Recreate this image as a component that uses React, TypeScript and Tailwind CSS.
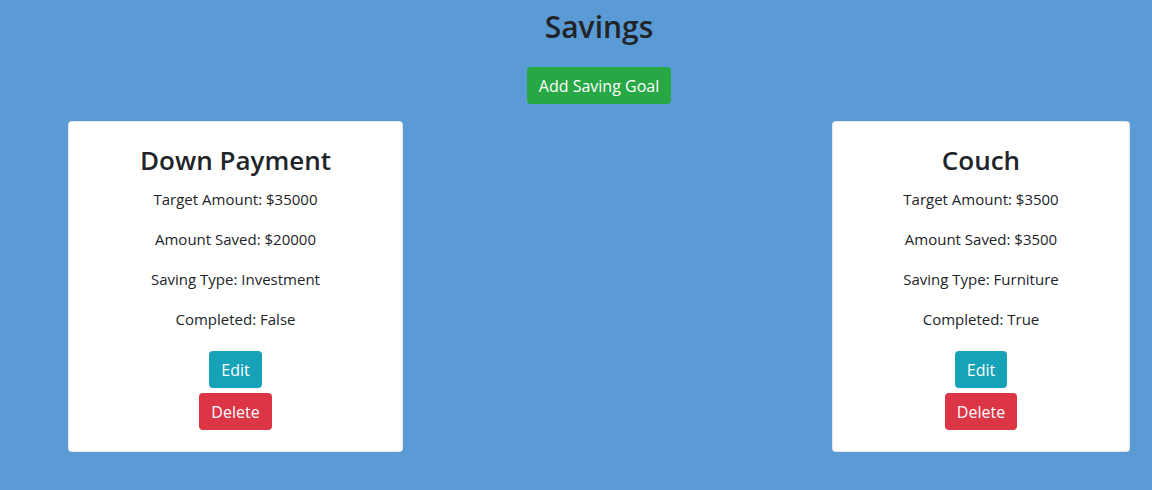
import React from 'react';

type Goal = {
  name: string;
  target: number;
  saved: number;
  type: string;
  completed: boolean;
  width: string;
};

const goals: Goal[] = [
  { name: 'Down Payment', target: 35000, saved: 20000, type: 'Investment', completed: false, width: 'w-[335px]' },
  { name: 'Couch', target: 3500, saved: 3500, type: 'Furniture', completed: true, width: 'w-[298px]' },
];

function GoalCard({ goal }: { goal: Goal }) {
  return (
    <div className={`${goal.width} bg-white border border-black/10 rounded-[4px] pt-[21px] pb-[21px] flex flex-col items-center text-center`}>
      <h3 className="text-[26px] leading-[34px] font-semibold mb-[10px]">{goal.name}</h3>
      <p className="text-[15px] leading-[24px] mb-[16px]">Target Amount: ${goal.target}</p>
      <p className="text-[15px] leading-[24px] mb-[16px]">Amount Saved: ${goal.saved}</p>
      <p className="text-[15px] leading-[24px] mb-[16px]">Saving Type: {goal.type}</p>
      <p className="text-[15px] leading-[24px] mb-[16px]">Completed: {goal.completed ? 'True' : 'False'}</p>
      <button className="bg-[#17a2b8] text-white h-[37px] px-[12px] rounded-[4px] mt-[4px]">Edit</button>
      <button className="bg-[#dc3545] text-white h-[37px] px-[12px] rounded-[4px] mt-[5px]">Delete</button>
    </div>
  );
}

export default function App() {
  return (
    <div
      className="min-h-[490px] bg-[#5a9bd6] text-[#212529] text-[16px]"
      style={{ fontFamily: '"Open Sans", "Noto Sans", sans-serif' }}
    >
      <div className="pl-[46px]">
        <h2 className="text-center text-[30px] leading-[38px] font-semibold pt-[8px]">Savings</h2>
        <div className="flex justify-center mt-[21px]">
          <button className="bg-[#28a745] text-white h-[37px] px-[12px] rounded-[4px]">Add Saving Goal</button>
        </div>
      </div>
      <div className="flex justify-between pl-[68px] pr-[22px] mt-[17px]">
        {goals.map(g => (
          <GoalCard key={g.name} goal={g} />
        ))}
      </div>
    </div>
  );
}
